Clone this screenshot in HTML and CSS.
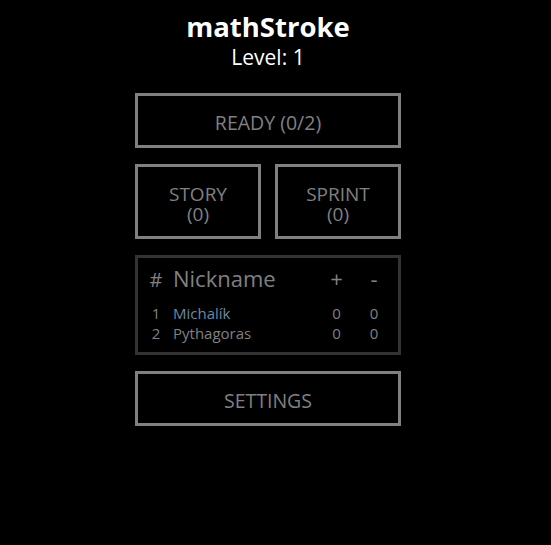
FILE: index.html
```html
<!DOCTYPE html>
<html>
<head>
<meta charset="utf-8">
<link rel="stylesheet" href="styles.css">
</head>
<body>
<div class="app">
  <h1 class="title">mathStroke</h1>
  <div class="level">Level: 1</div>
  <div class="btn ready">READY (0/2)</div>
  <div class="row">
    <div class="btn mode">STORY<br>(0)</div>
    <div class="btn mode">SPRINT<br>(0)</div>
  </div>
  <div class="board">
    <div class="trow head">
      <span class="c-num">#</span>
      <span class="c-name">Nickname</span>
      <span class="c-pl">+</span>
      <span class="c-mi">-</span>
    </div>
    <div class="trow">
      <span class="c-num">1</span>
      <span class="c-name me">Michalík</span>
      <span class="c-pl">0</span>
      <span class="c-mi">0</span>
    </div>
    <div class="trow">
      <span class="c-num">2</span>
      <span class="c-name">Pythagoras</span>
      <span class="c-pl">0</span>
      <span class="c-mi">0</span>
    </div>
  </div>
  <div class="btn settings">SETTINGS</div>
</div>
</body>
</html>
```
FILE: styles.css
```css
html, body {
  margin: 0;
  padding: 0;
  background: #000;
}
body {
  font-family: "Open Sans", "Noto Sans", sans-serif;
  color: #808080;
}
.app {
  width: 536px;
  display: flex;
  flex-direction: column;
  align-items: center;
  padding-top: 11px;
}
.title {
  margin: 0;
  color: #fff;
  font-size: 27.5px;
  font-weight: 700;
  line-height: 32px;
}
.level {
  color: #fff;
  font-size: 21px;
  line-height: 28px;
}
.btn {
  box-sizing: border-box;
  border: 3px solid #808080;
  padding-top: 5px;
  display: flex;
  align-items: center;
  justify-content: center;
  text-align: center;
  font-size: 19.5px;
  line-height: 20px;
  color: #808080;
}
.mode {
  width: 126px;
  height: 75px;
  font-size: 19px;
}
.ready {
  width: 266px;
  height: 55px;
  margin-top: 22px;
}
.row {
  display: flex;
  gap: 14px;
  margin-top: 16px;
}
.board {
  box-sizing: border-box;
  width: 266px;
  height: 100px;
  margin-top: 16px;
  border: 3px solid #333;
  padding: 5px 0 0 10px;
}
.trow {
  display: flex;
  align-items: baseline;
  font-size: 15px;
  line-height: 20px;
}
.trow.head {
  font-size: 22px;
  line-height: 30px;
  margin-bottom: 8px;
}
.c-num {
  width: 16px;
  margin-right: 9px;
  text-align: center;
}
.head .c-num {
  font-size: 20px;
}
.c-name {
  flex: 1;
}
.c-pl {
  width: 27px;
  text-align: center;
}
.c-mi {
  width: 48px;
  text-align: center;
}
.me {
  color: #6a88a6;
}
.settings {
  width: 266px;
  height: 55px;
  margin-top: 16px;
}
```
